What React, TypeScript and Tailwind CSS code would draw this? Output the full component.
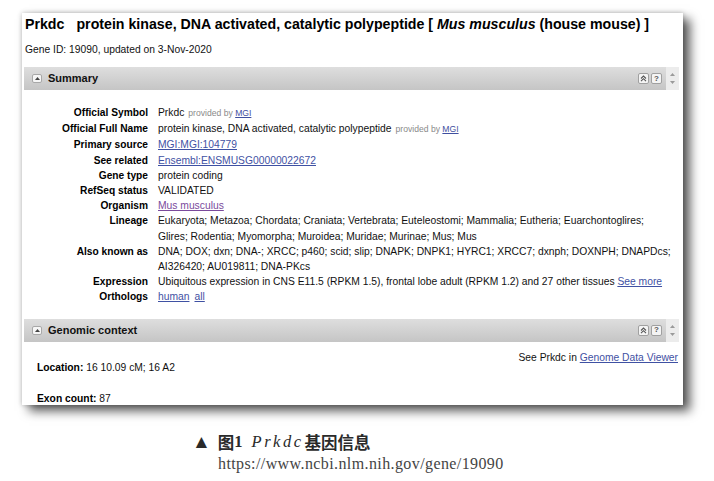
import React from 'react';

const sans = { fontFamily: '"Liberation Sans", Arial, sans-serif' };

function Provided() {
  return (
    <span className="ml-[4px] text-[8.6px] text-[#8a8a8a]">
      provided by <a className="text-[#3f4fa0] underline">MGI</a>
    </span>
  );
}

function Link({ children, visited = false }: { children: React.ReactNode; visited?: boolean }) {
  return (
    <a className={`underline ${visited ? 'text-[#7a4a9c]' : 'text-[#3f51a3]'}`}>{children}</a>
  );
}

function SectionBar({ title }: { title: string }) {
  return (
    <div className="ml-[2px] mr-[4px] flex h-[23px] items-stretch">
      <div className="flex flex-1 items-center bg-gradient-to-b from-[#dedede] to-[#c5c5c5] pl-[8px] pr-[4px]">
        <span className="flex h-[9px] w-[10px] items-center justify-center rounded-[2px] border border-[#a8a8a8] bg-[#f6f6f6]">
          <svg width="5" height="3" viewBox="0 0 5 3">
            <path d="M0 3 L2.5 0 L5 3 Z" fill="#444" />
          </svg>
        </span>
        <span className="ml-[6px] text-[11px] font-bold text-[#111]">{title}</span>
        <div className="ml-auto flex items-center gap-[2px]">
          <span className="flex h-[11px] w-[11px] items-center justify-center rounded-[2px] border border-[#a0a0a0] bg-[#f4f4f4]">
            <svg width="7" height="7" viewBox="0 0 7 7">
              <path d="M1 3.5 L3.5 1 L6 3.5 M1 6.2 L3.5 3.7 L6 6.2" stroke="#555" strokeWidth="1.1" fill="none" />
            </svg>
          </span>
          <span className="flex h-[11px] w-[11px] items-center justify-center rounded-[2px] border border-[#a0a0a0] bg-[#f4f4f4] text-[8px] font-bold leading-none text-[#555]">
            ?
          </span>
        </div>
      </div>
      <div className="flex w-[13px] flex-col items-center justify-center gap-[5px] bg-[#ececec]">
        <svg width="5" height="3" viewBox="0 0 5 3">
          <path d="M0 3 L2.5 0 L5 3 Z" fill="#9a9a9a" />
        </svg>
        <svg width="5" height="3" viewBox="0 0 5 3">
          <path d="M0 0 L2.5 3 L5 0 Z" fill="#9a9a9a" />
        </svg>
      </div>
    </div>
  );
}

const rows: { label: string; value: React.ReactNode }[] = [
  { label: 'Official Symbol', value: <>Prkdc<Provided /></> },
  {
    label: 'Official Full Name',
    value: <>protein kinase, DNA activated, catalytic polypeptide<Provided /></>,
  },
  { label: 'Primary source', value: <Link>MGI:MGI:104779</Link> },
  { label: 'See related', value: <Link>Ensembl:ENSMUSG00000022672</Link> },
  { label: 'Gene type', value: 'protein coding' },
  { label: 'RefSeq status', value: 'VALIDATED' },
  { label: 'Organism', value: <Link visited>Mus musculus</Link> },
  {
    label: 'Lineage',
    value: (
      <>
        Eukaryota; Metazoa; Chordata; Craniata; Vertebrata; Euteleostomi; Mammalia; Eutheria;
        Euarchontoglires;
        <br />
        Glires; Rodentia; Myomorpha; Muroidea; Muridae; Murinae; Mus; Mus
      </>
    ),
  },
  {
    label: 'Also known as',
    value: (
      <>
        DNA; DOX; dxn; DNA-; XRCC; p460; scid; slip; DNAPK; DNPK1; HYRC1; XRCC7; dxnph; DOXNPH;
        DNAPDcs;
        <br />
        AI326420; AU019811; DNA-PKcs
      </>
    ),
  },
  {
    label: 'Expression',
    value: (
      <>
        Ubiquitous expression in CNS E11.5 (RPKM 1.5), frontal lobe adult (RPKM 1.2) and 27 other
        tissues <Link>See more</Link>
      </>
    ),
  },
  {
    label: 'Orthologs',
    value: (
      <>
        <Link>human</Link>
        <span className="ml-[5px]" />
        <Link>all</Link>
      </>
    ),
  },
];

export default function App() {
  return (
    <div className="min-h-[481px] w-[714px] bg-white pl-[22px] pt-[13px]">
      <div
        className="h-[392px] w-[661px] overflow-hidden bg-white text-[10.3px] text-[#111] shadow-[7px_6px_10px_rgba(0,0,0,0.65),0_0_5px_rgba(0,0,0,0.25)]"
        style={sans}
      >
        <h1 className="mt-[3px] pl-[3px] text-[14.2px] font-bold leading-[16px] text-black">
          <span className="mr-[12px]">Prkdc</span>
          protein kinase, DNA activated, catalytic polypeptide [ <i>Mus musculus</i> (house mouse) ]
        </h1>
        <div className="mt-[11px] pl-[3px] leading-[14px]">Gene ID: 19090, updated on 3-Nov-2020</div>

        <div className="mt-[10px]">
          <SectionBar title="Summary" />
        </div>

        <div className="mt-[15px] grid grid-cols-[126px_1fr] gap-x-[10px] pr-[2px] leading-[15.2px]">
          {rows.map(row => (
            <React.Fragment key={row.label}>
              <div className="whitespace-nowrap text-right text-[10.2px] font-bold text-black">{row.label}</div>
              <div className="whitespace-nowrap">{row.value}</div>
            </React.Fragment>
          ))}
        </div>

        <div className="mt-[14px]">
          <SectionBar title="Genomic context" />
        </div>

        <div className="mt-[8px] flex items-start justify-between pl-[15px] pr-[5px] leading-[15.2px]">
          <div className="mt-[10px]">
            <div>
              <b className="text-black">Location:</b> 16 10.09 cM; 16 A2
            </div>
            <div className="mt-[15.8px]">
              <b className="text-black">Exon count:</b> 87
            </div>
          </div>
          <div>
            See Prkdc in <Link>Genome Data Viewer</Link>
          </div>
        </div>
      </div>

      <div className="mt-[27px] pl-[196px]">
        <div
          className="flex items-center text-[16.5px] font-bold leading-[20px] text-[#2a2a2a]"
          style={{ fontFamily: '"Liberation Serif", "Noto Sans CJK SC", serif' }}
        >
          <span className="-ml-[26px] mr-[7px] text-[19px] leading-[20px]">▲</span>
          <span style={{ fontFamily: '"Noto Sans CJK SC", sans-serif' }}>图</span>
          <span>1</span>
          <i className="ml-[9px] mr-[1px] font-normal tracking-[2.5px]">Prkdc</i>
          <span style={{ fontFamily: '"Noto Sans CJK SC", sans-serif' }}>基因信息</span>
        </div>
        <div
          className="mt-[2px] text-[16px] leading-[20px] tracking-[0.4px] text-[#444]"
          style={{ fontFamily: '"Liberation Serif", serif' }}
        >
          https://www.ncbi.nlm.nih.gov/gene/19090
        </div>
      </div>
    </div>
  );
}
